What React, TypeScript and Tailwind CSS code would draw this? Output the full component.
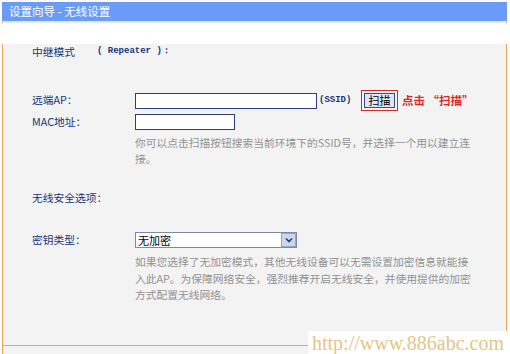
const CJK = "font-['SimSun','Noto_Sans_CJK_SC',sans-serif]";

function TextInput({ width }: { width: string }) {
  return <div className={`${width} h-[16px] border border-[#2e3f7c] bg-white`} />;
}

export default function App() {
  return (
    <div className={`relative w-[510px] h-[354px] bg-white pt-[2px] pl-[2px] overflow-hidden ${CJK}`}>
      <div className="w-[505px]">
        <div className="h-[19px] bg-[#6a9bf6] flex items-center pl-[7px] text-[11.5px] text-white">
          设置向导 - 无线设置
        </div>
        <div className="h-[2px] bg-[#e4ecf8] border-l border-r border-[#f0a552]" />

        <div className="h-[302px] bg-[#f3f3f3] border-l border-r border-b border-[#f0a552] pl-[29px] text-[10.75px] text-[#163679]">
          <div className="mt-[21px] h-[16px] flex items-center">
            <span className="w-[65px]">中继模式</span>
            <span className="font-['Liberation_Mono',monospace] text-[9px] font-bold">( Repeater )：</span>
          </div>

          <div className="mt-[30px] h-[21px] flex items-center">
            <span className="w-[103px]">远端AP：</span>
            <TextInput width="w-[182px]" />
            <span className="w-[44px] pl-[2px] font-['Liberation_Mono',monospace] text-[9px] font-bold">(SSID)</span>
            <div className="border border-[#d42a2a] p-[2px]">
              <div className="w-[31px] h-[15px] bg-[#dfe4f3] border border-[#3c4a86] flex items-center justify-center text-[11px] text-black leading-none">
                扫描
              </div>
            </div>
            <span className="ml-[4px] text-[11.5px] font-bold text-[#e02424]">点击 “扫描”</span>
          </div>

          <div className="mt-[3px] h-[16px] flex items-center">
            <span className="w-[103px]">MAC地址：</span>
            <TextInput width="w-[100px]" />
          </div>

          <div className="mt-[5px] pl-[103px] leading-[16px] text-[#929292]">
            你可以点击扫描按钮搜索当前环境下的SSID号，并选择一个用以建立连
            <br />
            接。
          </div>

          <div className="mt-[23px] h-[16px] flex items-center">无线安全选项：</div>

          <div className="mt-[26px] h-[16px] flex items-center">
            <span className="w-[103px]">密钥类型：</span>
            <div className="w-[162px] h-[16px] border border-[#7d8a9c] bg-white flex items-center justify-between text-black">
              <span className="pl-[2px] text-[11px]">无加密</span>
              <div className="w-[15px] h-[14px] bg-[#cbd7ec] border border-[#92a6c8] flex items-center justify-center">
                <svg width="8" height="6" viewBox="0 0 8 6">
                  <path d="M1 1.5 L4 4.5 L7 1.5" fill="none" stroke="#2b3f78" strokeWidth="1.6" />
                </svg>
              </div>
            </div>
          </div>

          <div className="mt-[6px] pl-[103px] leading-[16.5px] text-[#929292]">
            如果您选择了无加密模式，其他无线设备可以无需设置加密信息就能接
            <br />
            入此AP。为保障网络安全，强烈推荐开启无线安全，并使用提供的加密
            <br />
            方式配置无线网络。
          </div>
        </div>

        <div className="h-[24px] bg-[#f3f3f3] border-l border-b border-[#f0a552] flex items-start">
          <div className="ml-[394px] mt-[3px] w-[47px] h-[18px] bg-[#dfe4f3] border-t-2 border-[#4a6296]" />
          <div className="ml-[11px] mt-[3px] w-[47px] h-[18px] bg-[#dfe4f3] border-t-2 border-[#4a6296]" />
        </div>
      </div>

      <div className="absolute left-[308px] top-[331px] w-[202px] h-[23px] bg-white flex items-end pl-[4px] font-['Liberation_Serif',serif] text-[20px] leading-[22px] text-[#e6c488]">
        http://www.886abc.com
      </div>
    </div>
  );
}
